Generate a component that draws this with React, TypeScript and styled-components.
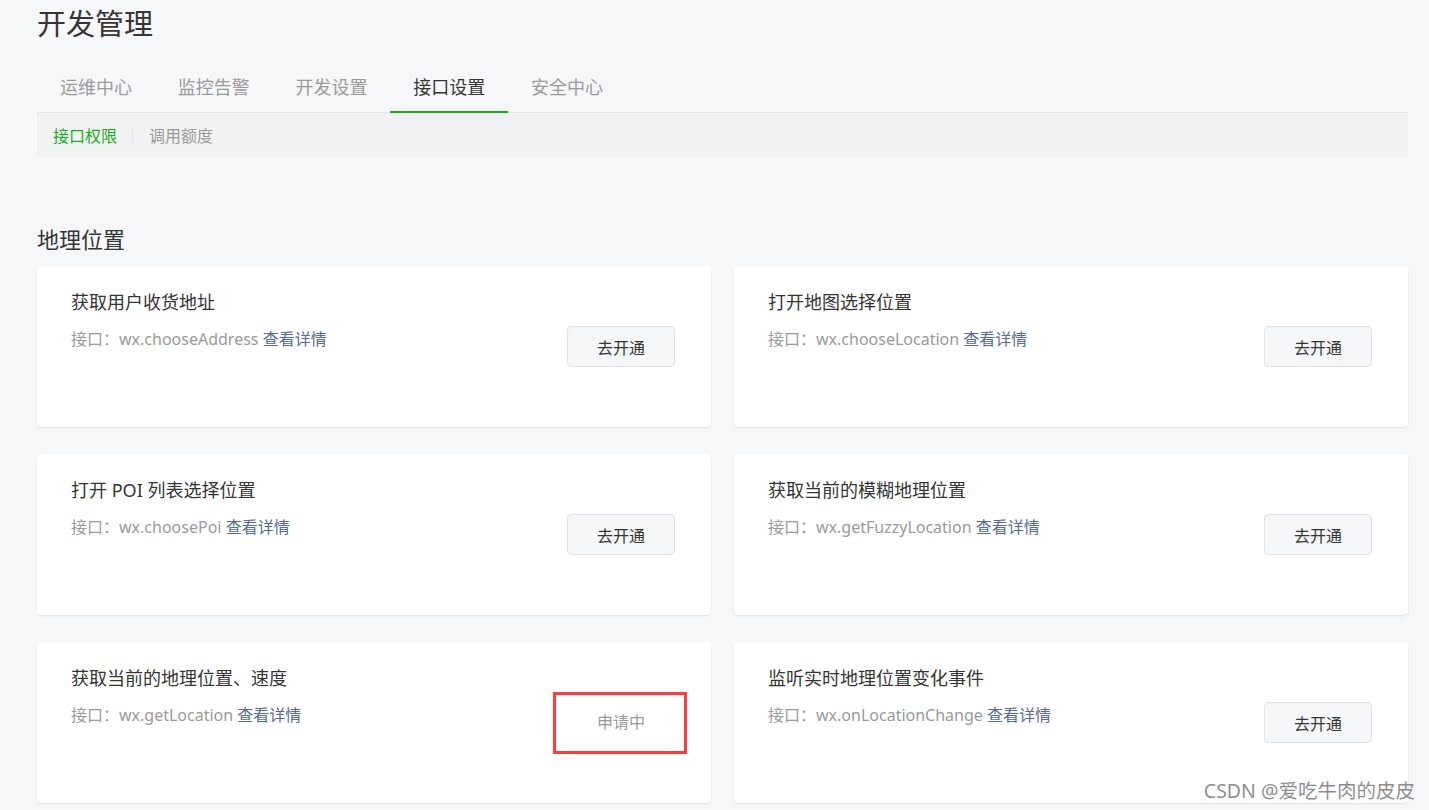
import React from "react";
import styled, { createGlobalStyle } from "styled-components";

const GlobalStyle = createGlobalStyle`
  html, body {
    margin: 0;
    padding: 0;
    background: #f6f7f9;
  }
  body {
    font-family: "Noto Sans", "Noto Sans CJK SC", sans-serif;
    color: #353535;
  }
  * { box-sizing: border-box; }
`;

const Page = styled.div`
  position: relative;
  width: 1429px;
  height: 810px;
  overflow: hidden;
  padding: 0 21px 0 37px;
`;

const PageTitle = styled.h1`
  margin: 0;
  padding-top: 4px;
  font-size: 29px;
  font-weight: 400;
  line-height: 40px;
  color: #353535;
`;

const TabBar = styled.div`
  margin-top: 19px;
  display: flex;
  border-bottom: 1px solid #e5e6e8;
`;

const Tab = styled.div<{ $active?: boolean }>`
  position: relative;
  padding: 0 22.9px;
  height: 49px;
  line-height: 49px;
  font-size: 18px;
  color: ${(p) => (p.$active ? "#353535" : "#9a9a9a")};
  &::after {
    content: "";
    display: ${(p) => (p.$active ? "block" : "none")};
    position: absolute;
    left: 0;
    right: 0;
    bottom: -1px;
    height: 2px;
    background: #1aad19;
  }
`;

const SubNav = styled.div`
  display: flex;
  align-items: center;
  height: 44px;
  background: #f1f2f4;
  padding-left: 16px;
`;

const SubItem = styled.div<{ $active?: boolean }>`
  font-size: 16px;
  color: ${(p) => (p.$active ? "#1aad19" : "#9a9a9a")};
`;

const SubDivider = styled.span`
  width: 1px;
  height: 16px;
  margin: 0 16px 0 15px;
  background: #e2e3e5;
`;

const SectionTitle = styled.h2`
  margin: 67px 0 12px;
  font-size: 22px;
  font-weight: 400;
  line-height: 30px;
  color: #353535;
`;

const Grid = styled.div`
  display: grid;
  grid-template-columns: 674px 674px;
  column-gap: 23px;
  row-gap: 27px;
`;

const Card = styled.div`
  height: 161px;
  background: #fff;
  border-radius: 4px;
  box-shadow: 0 1px 2px rgba(0, 0, 0, 0.09);
  padding: 24px 36px 0 34px;
  display: flex;
  align-items: flex-start;
  justify-content: space-between;
`;

const Info = styled.div`
  display: flex;
  flex-direction: column;
`;

const CardTitle = styled.div`
  font-size: 18px;
  line-height: 25px;
  color: #353535;
`;

const Desc = styled.div`
  margin-top: 13px;
  font-size: 16px;
  line-height: 22px;
  color: #9a9a9a;
`;

const Link = styled.a`
  color: #576b95;
  text-decoration: none;
`;

const ActionBox = styled.div`
  position: relative;
  margin-top: 36px;
`;

const OpenButton = styled.button`
  width: 108px;
  height: 41px;
  border: 1px solid #e1e2e4;
  border-radius: 4px;
  background: #f5f6f8;
  font-family: inherit;
  font-size: 16px;
  color: #353535;
  padding: 0;
`;

const Pending = styled.div`
  width: 108px;
  height: 40px;
  line-height: 40px;
  text-align: center;
  font-size: 16px;
  color: #9a9a9a;
`;

const Highlight = styled.div`
  position: absolute;
  left: -14px;
  top: -10px;
  width: 134px;
  height: 62px;
  border: 3px solid #ff3b3b;
`;

const Watermark = styled.div`
  position: absolute;
  right: 14px;
  bottom: 6px;
  font-size: 19.5px;
  line-height: 26px;
  color: rgba(120, 120, 120, 0.85);
  font-family: "Noto Sans", "Noto Sans CJK SC", sans-serif;
`;

type Item = { title: string; api: string; pending?: boolean };

const items: Item[] = [
  { title: "获取用户收货地址", api: "wx.chooseAddress" },
  { title: "打开地图选择位置", api: "wx.chooseLocation" },
  { title: "打开 POI 列表选择位置", api: "wx.choosePoi" },
  { title: "获取当前的模糊地理位置", api: "wx.getFuzzyLocation" },
  { title: "获取当前的地理位置、速度", api: "wx.getLocation", pending: true },
  { title: "监听实时地理位置变化事件", api: "wx.onLocationChange" },
];

const tabs = ["运维中心", "监控告警", "开发设置", "接口设置", "安全中心"];

export default function App() {
  return (
    <>
      <GlobalStyle />
      <Page>
        <PageTitle>开发管理</PageTitle>
        <TabBar>
          {tabs.map((t) => (
            <Tab key={t} $active={t === "接口设置"}>
              {t}
            </Tab>
          ))}
        </TabBar>
        <SubNav>
          <SubItem $active>接口权限</SubItem>
          <SubDivider />
          <SubItem>调用额度</SubItem>
        </SubNav>
        <SectionTitle>地理位置</SectionTitle>
        <Grid>
          {items.map((it) => (
            <Card key={it.api}>
              <Info>
                <CardTitle>{it.title}</CardTitle>
                <Desc>
                  接口：{it.api} <Link href="#">查看详情</Link>
                </Desc>
              </Info>
              <ActionBox>
                {it.pending ? (
                  <>
                    <Pending>申请中</Pending>
                    <Highlight />
                  </>
                ) : (
                  <OpenButton>去开通</OpenButton>
                )}
              </ActionBox>
            </Card>
          ))}
        </Grid>
        <Watermark>CSDN @爱吃牛肉的皮皮</Watermark>
      </Page>
    </>
  );
}
